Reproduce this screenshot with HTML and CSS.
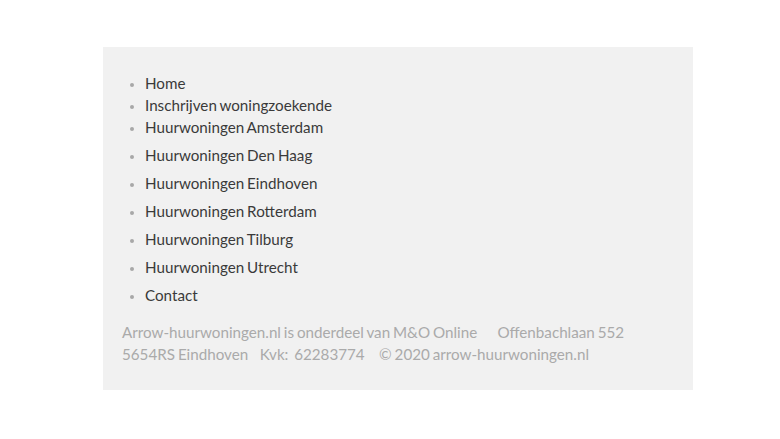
FILE: index.html
```html
<!DOCTYPE html>
<html lang="nl">
<head>
    <meta charset="UTF-8">
    <title>Arrow huurwoningen</title>
    <link rel="stylesheet" href="styles.css">
</head>
<body>
<div class="footer">
    <ul class="menu">
        <li>Home</li>
        <li>Inschrijven woningzoekende</li>
        <li class="gap">Huurwoningen Amsterdam</li>
        <li class="gap">Huurwoningen Den Haag</li>
        <li class="gap">Huurwoningen Eindhoven</li>
        <li class="gap">Huurwoningen Rotterdam</li>
        <li class="gap">Huurwoningen Tilburg</li>
        <li class="gap">Huurwoningen Utrecht</li>
        <li>Contact</li>
    </ul>
    <p class="info">Arrow-huurwoningen.nl is onderdeel van M&amp;O Online &nbsp; &nbsp; &nbsp; Offenbachlaan 552<br>5654RS Eindhoven &nbsp; &nbsp;Kvk:&nbsp; 62283774 &nbsp; &nbsp; © 2020 arrow-huurwoningen.nl</p>
</div>
</body>
</html>
```

FILE: styles.css
```css
body{
    margin: 0;
    padding: 47px 0 0 103px;
    font-family: Lato, "Open Sans", sans-serif;
    word-spacing: -1px;
}
.footer{
    width: 590px;
    box-sizing: border-box;
    background: #f1f1f1;
    padding: 25px 19px 25px;
}
.menu{
    margin: 0;
    padding-left: 23px;
    font-size: 15.2px;
    line-height: 22px;
    color: #3a3a3a;
}
.menu li::marker{
    color: #a8a8a8;
    font-size: 13px;
}
.menu .gap{
    margin-bottom: 6px;
}
.info{
    margin: 15px 0 0;
    font-size: 15.2px;
    line-height: 22px;
    color: #aaa;
}
```
